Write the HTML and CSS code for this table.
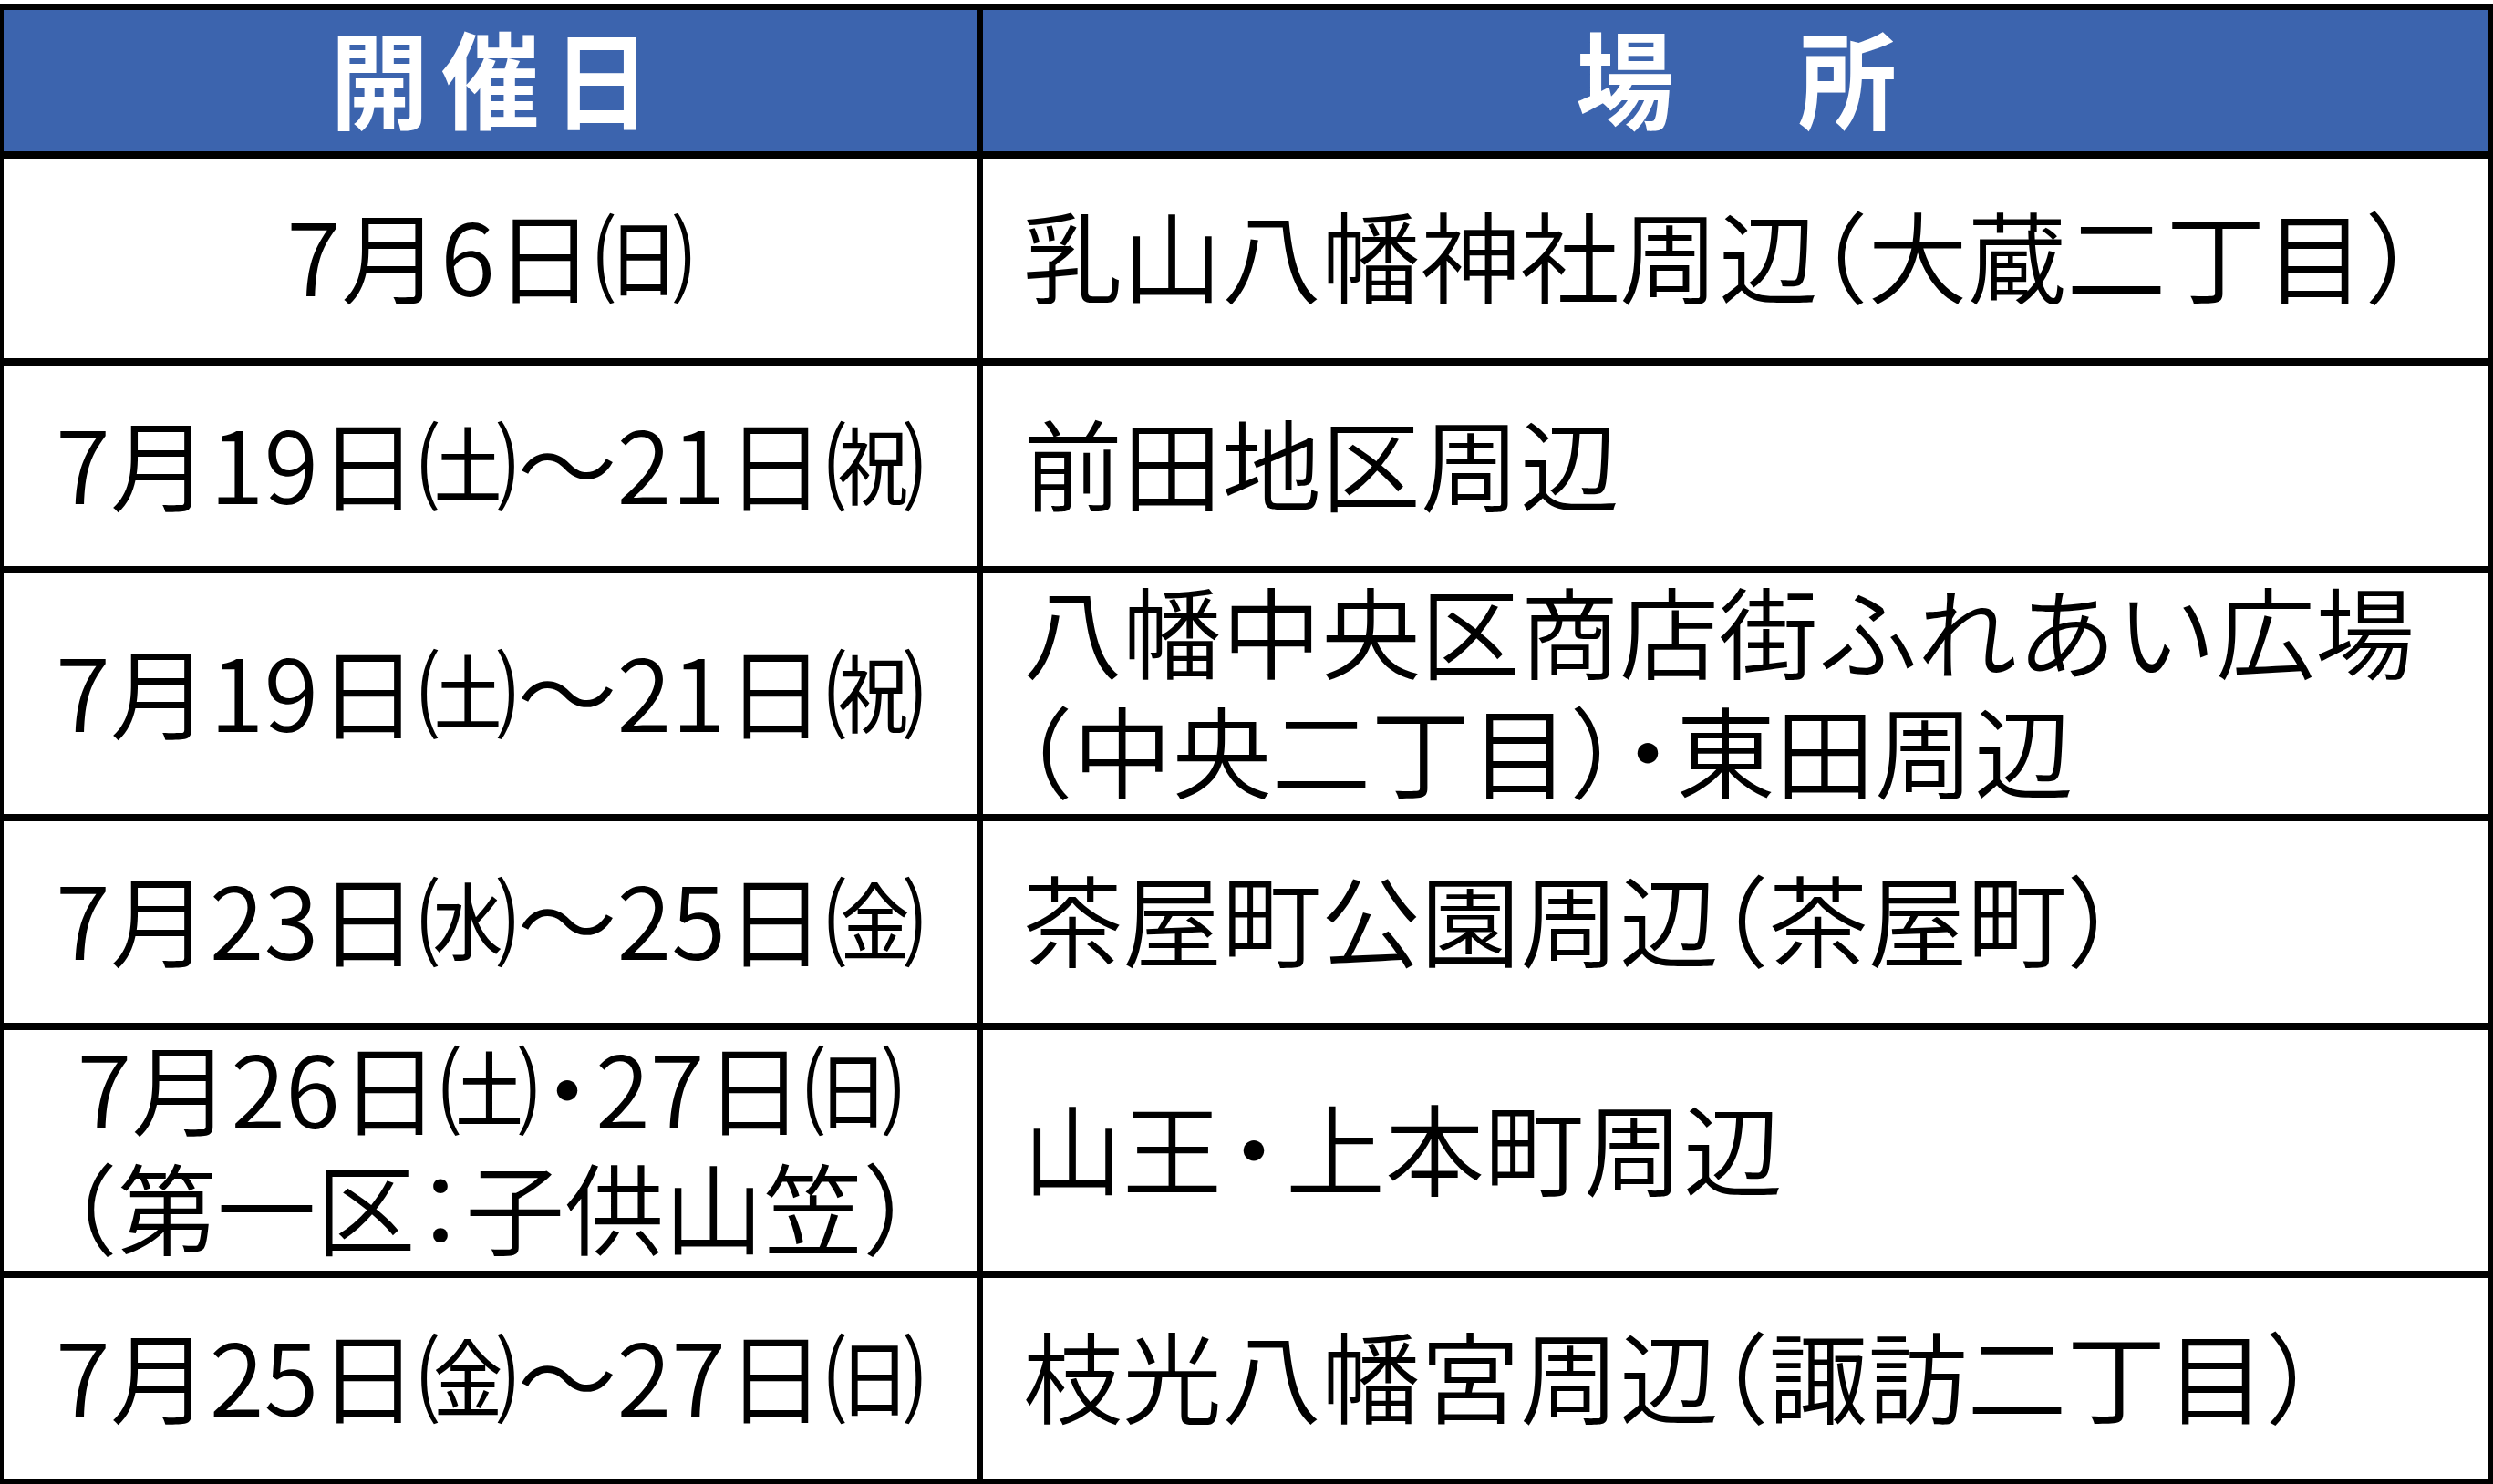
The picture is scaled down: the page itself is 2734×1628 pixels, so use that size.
FILE: index.html
```html
<!DOCTYPE html>
<html lang="ja">
<head>
<meta charset="utf-8">
<title>開催日・場所</title>
<link rel="stylesheet" href="styles.css">
</head>
<body>
<div class="table">
  <div class="cell head"><span class="ht">開催日</span></div>
  <div class="cell head"><span class="ht">場　所</span></div>

  <div class="cell date"><div class="ln">7月6日㈰</div></div>
  <div class="cell place"><div class="ln">乳山八幡神社周辺<span class="p">（</span>大蔵二丁目<span class="p">）</span></div></div>

  <div class="cell date"><div class="ln">7月19日㈯〜21日㈷</div></div>
  <div class="cell place"><div class="ln">前田地区周辺</div></div>

  <div class="cell date"><div class="ln">7月19日㈯〜21日㈷</div></div>
  <div class="cell place">
    <div class="ln">八幡中央区商店街ふれあい広場</div>
    <div class="ln"><span class="p">（</span>中央二丁目<span class="p">）</span><span class="dot">・</span>東田周辺</div>
  </div>

  <div class="cell date"><div class="ln">7月23日㈬〜25日㈮</div></div>
  <div class="cell place"><div class="ln">茶屋町公園周辺<span class="p">（</span>茶屋町<span class="p">）</span></div></div>

  <div class="cell date">
    <div class="ln">7月26日㈯<span class="dot">・</span>27日㈰</div>
    <div class="ln"><span class="p">（</span>第一区<span class="p">：</span>子供山笠<span class="p">）</span></div>
  </div>
  <div class="cell place"><div class="ln">山王<span class="dot wide">・</span>上本町周辺</div></div>

  <div class="cell date"><div class="ln">7月25日㈮〜27日㈰</div></div>
  <div class="cell place"><div class="ln">枝光八幡宮周辺<span class="p">（</span>諏訪二丁目<span class="p">）</span></div></div>
</div>
</body>
</html>
```

FILE: styles.css
```css
html, body {
  margin: 0;
  padding: 0;
  background: #ffffff;
}

.table {
  display: grid;
  grid-template-columns: 1067px 1651px;
  grid-template-rows: 155px 219px 220px 264px 221px 264px 220px;
  column-gap: 7px;
  row-gap: 8px;
  padding: 7px 5px 6px 4px;
  margin-top: 4px;
  width: max-content;
  background: #000000;
}

.cell {
  background: #ffffff;
  display: flex;
  flex-direction: column;
  justify-content: center;
  font-family: "Noto Sans CJK JP", "Noto Sans", sans-serif;
  font-size: 109px;
  font-weight: 350;
  line-height: 131px;
  color: #000000;
  white-space: nowrap;
}

.ln {
  position: relative;
  top: -6px;
}

.head {
  background: #3c64ae;
  align-items: center;
  color: #ffffff;
}

.ht {
  display: inline-block;
  font-size: 116px;
  font-weight: 700;
  line-height: 131px;
  letter-spacing: 15px;
  padding-left: 15px;
  transform: scaleX(0.93);
  position: relative;
  top: -6px;
}

.date {
  align-items: center;
  text-align: center;
}

.place {
  align-items: flex-start;
  padding-left: 44px;
}

.p {
  font-feature-settings: "halt" 1;
}

.dot {
  margin: 0 -23.5px;
}

.dot.wide {
  margin: 0 -19.5px;
}
```
